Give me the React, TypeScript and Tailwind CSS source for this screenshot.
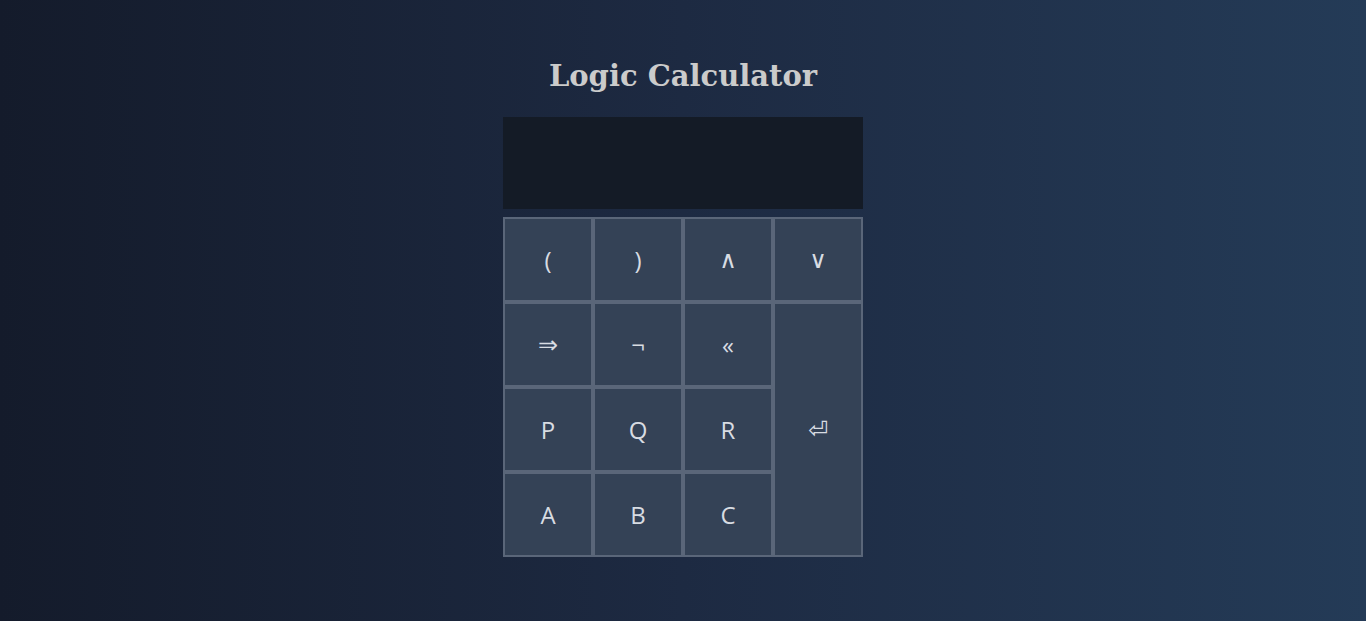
const KEYS = [
  { label: '(', cls: '' },
  { label: ')', cls: '' },
  { label: '∧', cls: "[font-family:'Liberation_Sans','DejaVu_Sans',sans-serif]" },
  { label: '∨', cls: "[font-family:'Liberation_Sans','DejaVu_Sans',sans-serif]" },
  { label: '⇒', cls: "[font-family:'DejaVu_Sans',sans-serif]" },
  { label: '¬', cls: '' },
  { label: '«', cls: '' },
  { label: '⏎', cls: "row-span-3 [font-family:'DejaVu_Sans',sans-serif]" },
  { label: 'P', cls: '' },
  { label: 'Q', cls: '' },
  { label: 'R', cls: '' },
  { label: 'A', cls: '' },
  { label: 'B', cls: '' },
  { label: 'C', cls: '' },
];

export default function App() {
  return (
    <div className="min-h-screen w-full bg-gradient-to-r from-[#141b2b] via-[#1d2a42] to-[#243b57] flex flex-col items-center pt-[53px]">
      {/* Title */}
      <h1 className="text-[29px] leading-[46px] font-bold text-[#cbcbcb] [font-family:'DejaVu_Serif',serif]">
        Logic Calculator
      </h1>

      {/* Display */}
      <div className="mt-[18px] w-[360px] h-[92px] bg-[#141b26]" />

      {/* Keypad */}
      <div className="mt-2 w-[360px] grid grid-cols-4 auto-rows-[85px] [font-family:'Open_Sans',sans-serif]">
        {KEYS.map((k, idx) => (
          <button
            key={idx}
            className={`bg-[#344256] border-2 border-[#5a6679] text-[#d8dce2] text-2xl flex items-center justify-center ${k.cls}`}
          >
            {k.label}
          </button>
        ))}
      </div>
    </div>
  );
}
